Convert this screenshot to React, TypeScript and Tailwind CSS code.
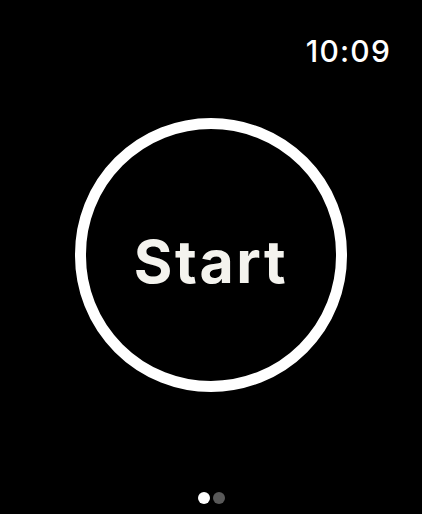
import React from "react";

export default function App() {
  return (
    <div className="w-[422px] h-[514px] bg-black flex flex-col items-center overflow-hidden" style={{ fontFamily: "Inter, 'Noto Sans', sans-serif" }}>
      <div className="w-full flex justify-end pr-[31px] pt-[33px]">
        <span className="text-white text-[30px] leading-[36px] font-medium tracking-[1.2px]">10:09</span>
      </div>
      <div className="mt-[49px] w-[272px] h-[274px] rounded-full border-[11px] border-white flex items-center justify-center pt-[13px]">
        <span className="text-[#f4f3ee] text-[59px] leading-none font-bold tracking-[2.6px]">Start</span>
      </div>
      <div className="mt-[100px] flex gap-[3px]">
        <div className="w-[12px] h-[12px] rounded-full bg-white" />
        <div className="w-[12px] h-[12px] rounded-full bg-[#595959]" />
      </div>
    </div>
  );
}
